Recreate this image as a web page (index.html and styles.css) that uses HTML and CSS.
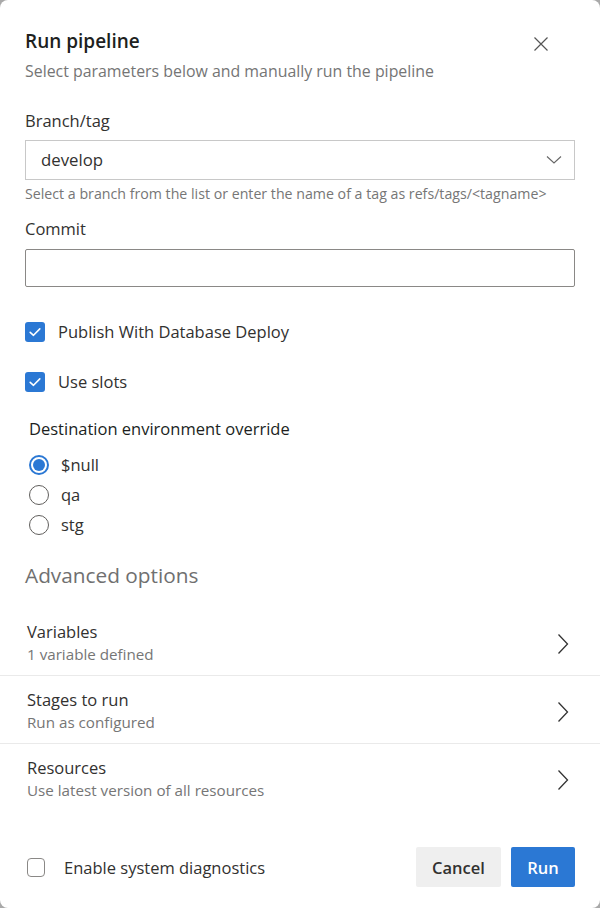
FILE: index.html
```html
<!DOCTYPE html>
<html>
<head>
<meta charset="utf-8">
<link rel="stylesheet" href="styles.css">
</head>
<body>
<div class="dialog">
  <header class="header">
    <div class="titles">
      <h1 class="title">Run pipeline</h1>
      <p class="subtitle">Select parameters below and manually run the pipeline</p>
    </div>
    <button class="close" aria-label="Close">
      <svg width="14" height="14" viewBox="0 0 14 14"><path d="M0.5 0.5 L13.5 13.5 M13.5 0.5 L0.5 13.5" stroke="#555" stroke-width="1.2" fill="none"/></svg>
    </button>
  </header>

  <div class="field">
    <label class="label">Branch/tag</label>
    <div class="select">
      <span class="select-value">develop</span>
      <svg width="16" height="10" viewBox="0 0 16 10"><path d="M1 1.5 L8 8 L15 1.5" stroke="#666" stroke-width="1.1" fill="none"/></svg>
    </div>
    <div class="helper">Select a branch from the list or enter the name of a tag as refs/tags/&lt;tagname&gt;</div>
  </div>

  <div class="field field-commit">
    <label class="label">Commit</label>
    <div class="input"></div>
  </div>

  <div class="check-row check-first">
    <span class="checkbox checked"><svg width="16" height="16" viewBox="0 0 16 16"><path d="M3.2 8.3 L6.5 11.3 L12.8 4.9" stroke="#fff" stroke-width="1.6" fill="none" stroke-linecap="round" stroke-linejoin="round"/></svg></span>
    <span class="check-label">Publish With Database Deploy</span>
  </div>
  <div class="check-row check-second">
    <span class="checkbox checked"><svg width="16" height="16" viewBox="0 0 16 16"><path d="M3.2 8.3 L6.5 11.3 L12.8 4.9" stroke="#fff" stroke-width="1.6" fill="none" stroke-linecap="round" stroke-linejoin="round"/></svg></span>
    <span class="check-label">Use slots</span>
  </div>

  <div class="radio-group">
    <div class="group-label">Destination environment override</div>
    <div class="radios">
      <div class="radio-row"><span class="radio selected"></span><span class="radio-label">$null</span></div>
      <div class="radio-row"><span class="radio"></span><span class="radio-label">qa</span></div>
      <div class="radio-row"><span class="radio"></span><span class="radio-label">stg</span></div>
    </div>
  </div>

  <h2 class="section-title">Advanced options</h2>

  <div class="options">
    <div class="option">
      <div class="option-text">
        <div class="option-title">Variables</div>
        <div class="option-sub">1 variable defined</div>
      </div>
      <svg class="chev" width="12" height="22" viewBox="0 0 12 22"><path d="M1.5 1.5 L10.5 11 L1.5 20.5" stroke="#333" stroke-width="1.3" fill="none"/></svg>
    </div>
    <div class="option">
      <div class="option-text">
        <div class="option-title">Stages to run</div>
        <div class="option-sub">Run as configured</div>
      </div>
      <svg class="chev" width="12" height="22" viewBox="0 0 12 22"><path d="M1.5 1.5 L10.5 11 L1.5 20.5" stroke="#333" stroke-width="1.3" fill="none"/></svg>
    </div>
    <div class="option">
      <div class="option-text">
        <div class="option-title">Resources</div>
        <div class="option-sub">Use latest version of all resources</div>
      </div>
      <svg class="chev" width="12" height="22" viewBox="0 0 12 22"><path d="M1.5 1.5 L10.5 11 L1.5 20.5" stroke="#333" stroke-width="1.3" fill="none"/></svg>
    </div>
  </div>

  <footer class="footer">
    <div class="diag">
      <span class="checkbox empty"></span>
      <span class="diag-label">Enable system diagnostics</span>
    </div>
    <div class="buttons">
      <button class="btn btn-cancel">Cancel</button>
      <button class="btn btn-run">Run</button>
    </div>
  </footer>
</div>
</body>
</html>
```

FILE: styles.css
```css
* { box-sizing: border-box; }
html, body { margin: 0; padding: 0; }
body {
  background: #a9a9a9;
  font-family: "Open Sans", "Noto Sans", sans-serif;
  color: #323130;
}
.dialog {
  width: 600px;
  height: 908px;
  background: #fff;
  border-radius: 8px;
  padding: 28px 25px 0 25px;
  display: flex;
  flex-direction: column;
}
.header {
  display: flex;
  justify-content: space-between;
  align-items: flex-start;
}
.title {
  margin: 0;
  font-size: 19px;
  font-weight: 600;
  line-height: 26px;
  color: #201f1e;
}
.subtitle {
  margin: 6px 0 0 0;
  font-size: 15.9px;
  line-height: 22px;
  color: #757575;
}
.close {
  border: 0;
  background: none;
  padding: 0;
  margin: 9px 27px 0 0;
  width: 14px;
  height: 14px;
  display: flex;
}
.field { margin-top: 28px; display: flex; flex-direction: column; }
.label {
  font-size: 16.5px;
  line-height: 22px;
  color: #323130;
}
.select {
  margin-top: 8px;
  height: 40px;
  border: 1px solid #c8c8c8;
  display: flex;
  align-items: center;
  justify-content: space-between;
  padding: 0 12px 0 15px;
}
.select-value { font-size: 16.8px; line-height: 22px; color: #323130; }
.helper {
  margin-top: 4px;
  font-size: 14.2px;
  line-height: 20px;
  color: #767676;
}
.field-commit { margin-top: 14px; }
.input {
  margin-top: 9px;
  height: 38px;
  border: 1px solid #8a8886;
  border-radius: 2px;
}
.check-row {
  display: flex;
  align-items: center;
  gap: 13px;
  height: 22px;
}
.check-first { margin-top: 34px; }
.check-second { margin-top: 28px; }
.checkbox {
  width: 20px;
  height: 20px;
  border-radius: 3px;
  display: flex;
  align-items: center;
  justify-content: center;
  flex: none;
}
.checkbox.checked { background: #2b78d4; }
.checkbox.empty { width: 18px; height: 19px; border: 1px solid #8a8886; border-radius: 4px; }
.check-label { font-size: 16.5px; line-height: 22px; color: #323130; }
.radio-group { margin-top: 25px; padding-left: 4px; }
.group-label { font-size: 16.5px; line-height: 22px; color: #201f1e; }
.radios { margin-top: 10px; }
.radio-row { display: flex; align-items: center; gap: 12px; height: 30px; }
.radio {
  width: 20px; height: 20px;
  border: 1px solid #605e5c;
  border-radius: 50%;
  flex: none;
  position: relative;
}
.radio.selected { border: 2px solid #2b78d4; }
.radio.selected::after {
  content: "";
  position: absolute;
  left: 2px; top: 2px;
  width: 12px; height: 12px;
  border-radius: 50%;
  background: #2b78d4;
}
.radio-label { font-size: 16.5px; line-height: 22px; color: #323130; }
.section-title {
  margin: 21px 0 0 0;
  font-size: 20.8px;
  font-weight: 400;
  line-height: 28px;
  color: #707070;
}
.options { margin: 19px -25px 0 -25px; }
.option {
  display: flex;
  align-items: flex-start;
  justify-content: space-between;
  padding: 13px 25px 0 27px;
  height: 68px;
  border-bottom: 1px solid #eaeaea;
}
.option:last-child { border-bottom: 0; }
.option-text { display: flex; flex-direction: column; }
.option-title { font-size: 16.5px; line-height: 22px; color: #323130; }
.option-sub { font-size: 15.2px; line-height: 22px; color: #767676; }
.chev { margin: 12px 6px 0 0; }
.footer {
  margin-top: auto;
  margin-bottom: 21px;
  display: flex;
  align-items: center;
  justify-content: space-between;
}
.diag { display: flex; align-items: center; gap: 19px; padding-left: 2px; }
.diag-label { font-size: 16.5px; color: #323130; }
.buttons { display: flex; gap: 10px; }
.btn {
  height: 40px;
  border: 0;
  border-radius: 2px;
  font-family: inherit;
  font-size: 16.5px;
  font-weight: 600;
  padding: 0;
}
.btn-cancel { width: 85px; background: #efefef; color: #323130; }
.btn-run { width: 64px; background: #2b78d4; color: #fff; }
```
